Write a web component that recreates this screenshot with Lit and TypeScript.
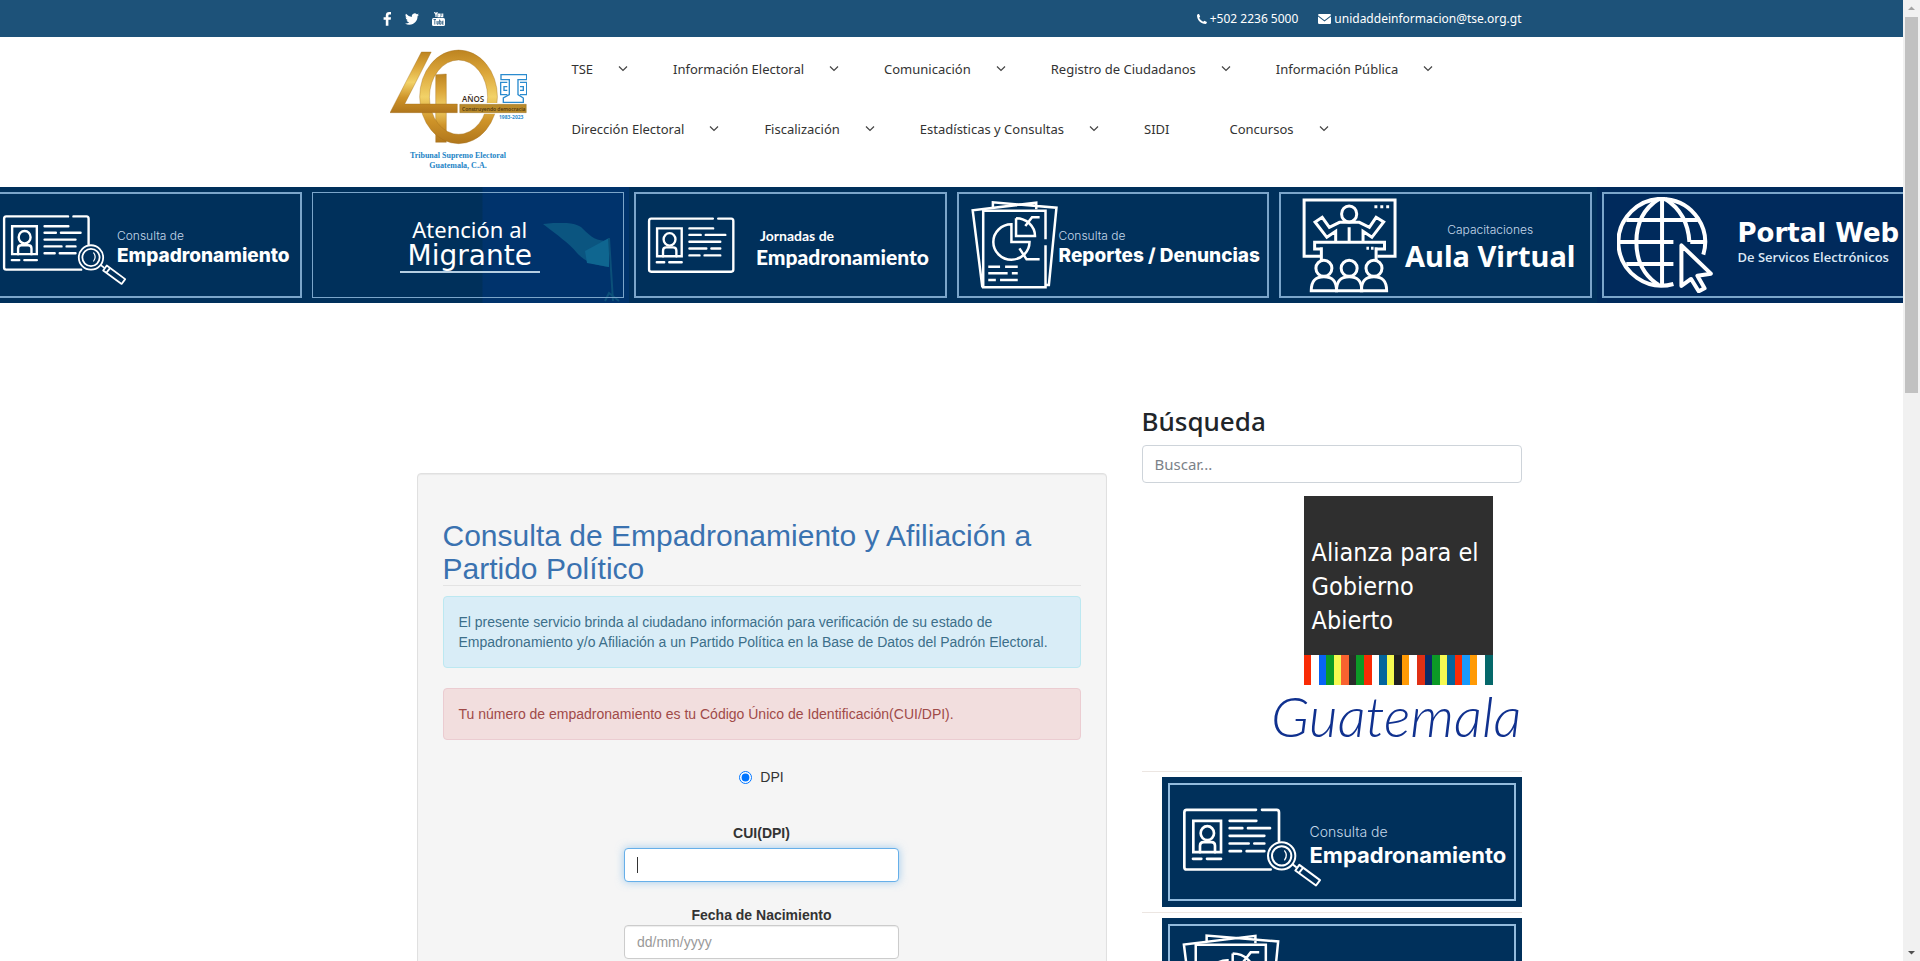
import { LitElement, html, css, svg, nothing } from "lit";
import { customElement, property } from "lit/decorators.js";

const idCard = (lens: boolean) => svg`
  <g fill="none" stroke="#fff" stroke-width="8" stroke-linecap="round" stroke-linejoin="round">
    ${lens
      ? svg`<path d="M408 162H200Q193 162 193 170V334Q193 341 200 341H452M426 162H470Q477 162 477 170V256"/>`
      : svg`<path d="M408 162H200Q193 162 193 170V334Q193 341 200 341H470Q477 341 477 334V170Q477 162 470 162H426"/>`}
    <path d="M220 195H303V289H220Z" stroke-linejoin="miter"/>
    <ellipse cx="262" cy="232" rx="20" ry="21"/>
    <path d="M240 289V270Q240 259 251 259H274Q285 259 285 270V289"/>
    <path d="M329 195H409M329 217H367M384 217H450M329 240H433M329 263H386M403 263H433M329 286H363M380 286H433M219 309H244M261 309H303"/>
  </g>
  ${lens
    ? svg`<g fill="#00305b" stroke="#fff" stroke-width="6" stroke-linejoin="round">
        <circle cx="485" cy="300" r="41"/><circle cx="485" cy="300" r="29"/>
        <path d="M494 285Q504 298 494 312" fill="none" stroke-linecap="round" stroke-width="4"/>
        <path d="M517 325L530 335" />
        <path d="M538 327L600 373L588 389L526 344Z"/><path d="M549 336L537 351" />
      </g>`
    : nothing}`;

const thick = (paths: unknown) => svg`<g fill="none" stroke="#fff" stroke-width="3" stroke-linejoin="miter" stroke-linecap="butt">${paths}</g>`;

const reports = thick(svg`<g transform="scale(.421 .3333) translate(-833 -63)">
  <g stroke-width="2.5">
    <path vector-effect="non-scaling-stroke" d="M1010 178V92H862V322H1010V196"/>
    <path vector-effect="non-scaling-stroke" d="M860 322L837 91L988 68V88M885 84V67L1036 83L1018 315H1010"/>
    <path vector-effect="non-scaling-stroke" d="M929 133A43 53 0 1 0 972 186H929Z"/>
    <path vector-effect="non-scaling-stroke" d="M940 115V168H985A45 53 0 0 0 940 115M962 138L978 112H996M948 205L965 238H996"/>
    <path vector-effect="non-scaling-stroke" d="M874 260H902M914 260H944M874 280H920M930 280H944M874 300H892M902 300H944"/>
  </g></g>`);

const classroom = thick(svg`<g transform="scale(.421 .3333) translate(-101 -52)">
  <path vector-effect="non-scaling-stroke" d="M147 227H106V58H322V227H280"/>
  <path vector-effect="non-scaling-stroke" d="M273 78H280M287 78H294M301 78H308M254 203H260M265 203H271"/>
  <ellipse vector-effect="non-scaling-stroke" cx="213" cy="100" rx="18" ry="24"/>
  <path vector-effect="non-scaling-stroke" d="M181 184V152L160 170L132 124L149 110L166 140L190 125H237L261 140L277 110L295 124L267 170L246 152V184M213 140V184"/>
  <path vector-effect="non-scaling-stroke" d="M147 205H131V185H297V205H277M147 200V238M277 200V238"/>
  ${[153, 213, 272].map(x => svg`<ellipse vector-effect="non-scaling-stroke" cx=${x} cy="263" rx="19" ry="24"/>
  <path vector-effect="non-scaling-stroke" d="M${x - 30} 330C${x - 30} 300 ${x - 20} 288 ${x} 288C${x + 20} 288 ${x + 30} 300 ${x + 30} 330Z"/>`)}
</g>`);

const globe = svg`<g fill="none" stroke="#fff" stroke-width="4" stroke-linejoin="round"><g transform="scale(.421 .3333) translate(-846 -51)">
  <path vector-effect="non-scaling-stroke" d="M1051 224A103 130 0 1 0 980 312"/>
  <path vector-effect="non-scaling-stroke" d="M945 57Q892 100 892 186T945 315M961 57Q1014 100 1018 186M953 56V316"/>
  <path vector-effect="non-scaling-stroke" d="M868 120H1038M850 186H980M1020 186H1056M868 252H980"/>
  <path vector-effect="non-scaling-stroke" d="M999 196V318L1022 297L1040 334L1054 325L1037 287L1069 281Z"/>
</g></g>`;

type Banner = {
  kind: string;
  small: string;
  big: string;
  icon?: unknown;
  box?: string;
};

const BANNERS: Record<string, Banner> = {
  empadronamiento: { kind: "consulta", small: "Consulta de", big: "Empadronamiento", icon: idCard(true), box: "186 154 420 242" },
  migrante: { kind: "migrante", small: "Atención al", big: "Migrante" },
  jornadas: { kind: "jornadas", small: "Jornadas de", big: "Empadronamiento", icon: idCard(false), box: "186 154 300 194" },
  reportes: { kind: "reportes", small: "Consulta de", big: "Reportes / Denuncias", icon: reports, box: "0 0 88 88" },
  aula: { kind: "aula", small: "Capacitaciones", big: "Aula Virtual", icon: classroom, box: "0 0 95 95" },
  portal: { kind: "portal", small: "De Servicos Electrónicos", big: "Portal Web", icon: globe, box: "0 0 96 96" },
};

@customElement("tse-banner")
export class TseBanner extends LitElement {
  @property() name = "empadronamiento";
  @property({ type: Boolean, reflect: true }) large = false;

  static styles = css`
    :host { display: block; }
    .card { box-sizing: border-box; height: 116px; padding: 5px; background: #00305b; color: #fff; text-decoration: none; display: flex; font-family: Inter, sans-serif; overflow: hidden; }
    .frame { flex: 1; min-width: 0; box-sizing: border-box; border: 2px solid #7ba5ca; display: flex; align-items: center; white-space: nowrap; }
    svg { flex: none; display: block; }
    .text { display: flex; flex-direction: column; padding-top: 4px; }
    .small { font-size: 12px; line-height: 18px; font-weight: 300; color: #c5d8ea; }
    .big { font-size: 19px; line-height: 22px; font-weight: 800; }
    .consulta .frame { padding-left: 11px; }
    .consulta svg { width: 125px; height: 72px; margin-top: 10px; }
    .consulta .text { margin-left: -10px; }
    .migrante { background: linear-gradient(90deg, #00305b 0 175px, #00336c 176px 100%); position: relative; }
    .migrante .frame { justify-content: center; border-width: 1px; z-index: 1; }
    .migrante .text { align-items: center; padding: 0; margin-left: 4px; }
    .migrante .small { font: 400 22px/24px "Noto Sans", sans-serif; color: #fff; }
    .migrante .big { font: 400 28px/30px "DejaVu Sans", sans-serif; border-bottom: 2px solid #b5cee2; padding: 0 8px; }
    .flag { position: absolute; right: 8px; bottom: 0; width: 78px; height: 80px; }
    .jornadas .frame { padding-left: 11px; }
    .jornadas svg { width: 89px; height: 58px; }
    .jornadas .text { margin-left: 20px; }
    .jornadas .small { font: 700 14px/20px Lato, sans-serif; color: #fff; padding-left: 4px; }
    .jornadas .big { font: 900 21px/22px Lato, sans-serif; }
    .reportes .frame { padding-left: 12px; }
    .reportes svg { width: 88px; height: 88px; }
    .aula .frame { padding-left: 21px; }
    .aula svg { width: 95px; height: 95px; }
    .aula .text { align-items: center; margin-left: 8px; }
    .aula .big { font: 700 29px/34px "Noto Sans", sans-serif; }
    .portal { background: #002a5c; }
    .portal .frame { padding-left: 13px; }
    .portal svg { width: 96px; height: 96px; }
    .portal .text { margin-left: 25px; flex-direction: column-reverse; padding: 0 0 8px; }
    .portal .big { font: 700 26px/32px "DejaVu Sans", sans-serif; }
    .portal .small { font: 600 13px/16px "Open Sans", sans-serif; color: #dce8f5; }
    :host([large]) .card { height: 130px; padding: 6px; }
    :host([large]) .frame { padding-left: 12px; border-color: #93bbdd; }
    :host([large]) .small { font-size: 14px; line-height: 22px; }
    :host([large]) .big { font-size: 22px; line-height: 24px; font-weight: 700; }
    :host([large]) .consulta svg { width: 140px; height: 81px; }
    :host([large]) .consulta .text { margin-left: -12px; }
    :host([large]) .reportes svg { width: 99px; height: 99px; }
  `;

  render() {
    const b = BANNERS[this.name];
    return html`<a class="card ${b.kind}" href="#">
      ${b.kind === "migrante"
        ? html`<svg class="flag" viewBox="0 0 78 80" aria-hidden="true">
            <path d="M0 1C16-1 30-1 38 4C46 12 54 20 66 17V44C52 42 42 39 34 30C26 20 14 12 0 1Z" fill="#0b5580"/>
            <path d="M42 28L66 15V44L44 40Z" fill="#0f6690"/>
            <path d="M66 15L70 78M62 78L66 70L76 78" stroke="#0b5079" stroke-width="2" fill="none"/>
          </svg>`
        : nothing}
      <span class="frame">
        ${b.icon ? html`<svg viewBox=${b.box!} aria-hidden="true">${b.icon}</svg>` : nothing}
        <span class="text"><span class="small">${b.small}</span><span class="big">${b.big}</span></span>
      </span>
    </a>`;
  }
}

const NAV: [string, boolean][] = [
  ["TSE", true], ["Información Electoral", true], ["Comunicación", true], ["Registro de Ciudadanos", true], ["Información Pública", true],
  ["Dirección Electoral", true], ["Fiscalización", true], ["Estadísticas y Consultas", true], ["SIDI", false], ["Concursos", true],
];

const STRIPES = ["#f92b05", "#fff", "#0863f5", "#0c9a26", "#f5f951", "#f9622f", "#2b2b2b", "#0c9a26", "#f92b05", "#fff", "#03659c", "#f5f951", "#1f1f1f",
  "#ff9a05", "#fff", "#e03014", "#0a2c66", "#0c9a26", "#f5f951", "#03659c", "#f92b05", "#1899fb", "#ff9a05", "#fff", "#05686a"];

@customElement("app-root")
export class AppRoot extends LitElement {
  static styles = css`
    :host { display: grid; grid-template-columns: minmax(0, 1fr) 17px; height: 100vh; overflow: hidden; background: #fff; color: #212529; font-family: "Noto Sans", sans-serif; }
    .page { min-width: 0; overflow: hidden; }
    .container { box-sizing: border-box; max-width: 1140px; margin: 0 auto; }
    a { color: inherit; text-decoration: none; }

    .topbar { background: #1d5279; color: #fff; font-size: 12px; }
    .topbar .container { height: 37px; display: flex; justify-content: space-between; align-items: center; }
    .social, .contact { display: flex; align-items: center; }
    .social { gap: 13px; padding-left: 1px; }
    .social a { display: flex; }
    .contact { gap: 20px; }
    .contact a { display: flex; align-items: center; gap: 3px; }
    svg { display: block; }

    .header { display: flex; height: 150px; }
    .logo { width: 137px; padding: 12px 45px 0 8px; flex: none; }
    .caption { color: #2384c6; font: 700 8px/10px "Liberation Serif", serif; text-align: center; margin-top: 5px; }
    .nav { flex: 1; display: flex; flex-wrap: wrap; align-content: flex-start; padding: 2px 0 0; margin: 0; list-style: none; font-size: 13px; color: #333; }
    .nav li { height: 60px; display: flex; align-items: center; margin-right: 44px; }
    .nav li.plain { margin-right: 60px; }
    .nav a { display: flex; align-items: center; gap: 24px; }

    .slider { overflow: hidden; background: #00305b; }
    .track { display: flex; margin: 0 -16px; }
    .track tse-banner { flex: 1 1 0; min-width: 0; }

    .main { display: grid; grid-template-columns: minmax(0, 1fr) 380px; padding-top: 96px; }
    .content { padding: 0 35px; font-family: "Liberation Sans", sans-serif; font-size: 14px; line-height: 20px; color: #333; }
    .well { box-sizing: border-box; margin-top: 74px; padding: 45px 25px 60px; background: #f5f5f5; border: 1px solid #e0e0e0; border-radius: 4px; box-shadow: inset 0 1px 1px rgba(0, 0, 0, .05); }
    .well h2 { margin: 0 0 10px; font-size: 30px; line-height: 33px; font-weight: 500; color: #3a72b0; border-bottom: 1px solid #e3e3e3; }
    .alert { border: 1px solid; border-radius: 4px; padding: 15px; margin: 0 0 20px; }
    .info { background: #d9edf7; border-color: #bce8f1; color: #3c6f8a; }
    .danger { background: #f2dede; border-color: #ebccd1; color: #a04a48; }
    form { display: flex; flex-direction: column; align-items: center; }
    .choice { display: flex; align-items: center; gap: 8px; height: 34px; }
    .choice input { margin: 0; width: 13px; height: 13px; accent-color: #0075ff; }
    .field { font-weight: 700; margin-top: 29px; }
    .control { box-sizing: border-box; width: 275px; height: 34px; margin-top: 5px; padding: 6px 12px; border: 1px solid #ccc; border-radius: 4px; background: #fff; font: 14px/20px "Liberation Sans", sans-serif; color: #555; box-shadow: inset 0 1px 1px rgba(0, 0, 0, .075); outline: none; }
    .control::placeholder { color: #999; opacity: 1; }
    .active { border-color: #66afe9; box-shadow: 0 0 8px rgba(102, 175, 233, .6); background: linear-gradient(#333, #333) 12px center / 1px 16px no-repeat #fff; }
    .date-label { margin-top: 23px; }
    .date { margin-top: 0; }

    .side h3 { margin: 0; padding-top: 5px; font-size: 26px; line-height: 34px; font-weight: 500; }
    .search { box-sizing: border-box; width: 100%; height: 38px; margin-top: 7px; padding: 6px 12px; border: 1px solid #ced4da; border-radius: 4px; font: 15px/24px "Noto Sans", sans-serif; display: block; }
    .search::placeholder { color: #7b8289; opacity: 1; }
    .ogp { margin: 13px 0 0; display: flex; flex-direction: column; align-items: flex-end; }
    .square { width: 189px; margin-right: 29px; background: #2f2f2f; color: #fff; }
    .square p { margin: 0; padding: 40px 0 17px 8px; font: 25px/34px "DejaVu Sans Condensed", "DejaVu Sans", sans-serif; font-stretch: condensed; white-space: nowrap; }
    .stripes { display: flex; height: 30px; }
    .stripes i { flex: 1; }
    .script { color: #10318f; font: italic 300 56px/62px Lato, cursive; padding-bottom: 24px; }
    .rule { border: 0; border-top: 1px solid #ece6e2; margin: 0 0 5px; }
    .side tse-banner { margin: 0 0 5px 20px; }

    .scrollbar { background: #f1f1f1; display: flex; flex-direction: column; align-items: center; }
    .thumb { width: 13px; height: 376px; background: #c1c1c1; }
    .arrow { width: 17px; height: 17px; }
    .down { margin-top: auto; }
  `;

  logo() {
    return html`<svg width="137" height="97" viewBox="0 0 137 97" role="img" aria-label="40 años TSE">
      <defs>
        <linearGradient id="gold" x1="0" y1="0" x2="0" y2="1">
          <stop offset="0" stop-color="#bd8420"/><stop offset=".25" stop-color="#dca73b"/><stop offset=".5" stop-color="#f2d268"/><stop offset=".75" stop-color="#cf9429"/><stop offset="1" stop-color="#b0761c"/>
        </linearGradient>
      </defs>
      <g transform="scale(.408 .3333) translate(-48 -147)">
        <path fill="url(#gold)" stroke="#a06c18" d="M160 224L186 222V427H160Z"/>
        <path fill="url(#gold)" stroke="#a06c18" fill-rule="evenodd" d="M216 150A95 140 0 0 1 216 431A95 140 0 0 1 216 150ZM216 180A71 111 0 0 0 216 403A71 111 0 0 0 216 180Z"/>
        <path fill="#fff" d="M214 309H384V341H214Z"/>
        <path fill="url(#gold)" stroke="#a06c18" d="M125 156H149L84 312H213V338H48Z"/>
        <path fill="#b98a2b" stroke="#8a6217" d="M219 313H382V338H219Z"/>
      </g>
      <g transform="scale(.3333) translate(-12 -21)" fill="none" stroke="#2a8bcf" stroke-width="4">
        <path d="M345 98H422V113H396V158L412 168V181H352V168L370 158V113H345Z"/>
        <path d="M364 121H344V158H364M364 134H354V145H364M402 121H422V158H402M402 134H412V145H402"/>
      </g>
      <text x="72" y="53" font-family="Open Sans" font-weight="600" font-size="8" fill="#3a2b18">AÑOS</text>
      <text x="72" y="62" font-family="Open Sans" font-weight="600" font-size="5" fill="#4b350f">Construyendo democracia</text>
      <text x="109" y="70" font-family="Open Sans" font-weight="700" font-size="5" fill="#2a8bcf">1983-2023</text>
    </svg>`;
  }

  render() {
    return html`
      <div class="page">
        <div class="topbar"><div class="container">
          <div class="social">
            <a href="#" aria-label="Facebook"><svg width="9" height="14" viewBox="0 0 9 14"><path fill="#fff" d="M8 .1V2.4H6.7C5.7 2.4 5.4 2.9 5.4 3.6V5.2H8L7.7 7.7H5.4V13.7H2.8V7.7H.6V5.2H2.8V3.3C2.8 1.200 4.100 0 6.100 0C7 0 7.800 0 8 .1Z"/></svg></a>
            <a href="#" aria-label="Twitter"><svg width="14" height="14" viewBox="0 0 24 24"><path fill="#fff" d="M24 4.600a10 10 0 0 1-2.800.8 5 5 0 0 0 2.100-2.700 10 10 0 0 1-3.100 1.200 4.900 4.900 0 0 0-8.400 4.500A14 14 0 0 1 1.700 3.200a4.900 4.900 0 0 0 1.500 6.500 4.900 4.900 0 0 1-2.200-.6v.1a4.900 4.900 0 0 0 3.900 4.800 5 5 0 0 1-2.200.1 4.900 4.900 0 0 0 4.600 3.400A9.900 9.900 0 0 1 0 19.500a14 14 0 0 0 7.500 2.200c9.100 0 14-7.500 14-14v-.6A10 10 0 0 0 24 4.600z"/></svg></a>
            <a href="#" aria-label="YouTube"><svg width="13" height="14" viewBox="0 0 13 14"><rect x="0" y="6" width="13" height="8" rx="1.500" fill="#fff"/><path fill="none" stroke="#fff" stroke-width="1.200" d="M2.500 0L4 2.800V5M5.300 0L4 2.800M6 2.200H7.400V4.600H6ZM9 1.500V4.600H10.700V1.500"/><path stroke="#1d5279" stroke-width=".8" fill="none" d="M1.500 7.500H4M2.800 7.500V12.500M5 9V12.200H6.200V9M7.600 7.500V12.200H9V9.200H7.600M11.600 10.800H10.300V9.200H11.600M10.300 10.800V12.200H11.600"/></svg></a>
          </div>
          <div class="contact">
            <a href="#"><svg width="10" height="10" viewBox="0 0 10 10"><path fill="#fff" d="M0 1.200C.2.500 1.300 0 2 .1L3.200 2.600L2.200 3.800C2.900 5.400 4.500 7.100 6.200 7.800L7.400 6.800L9.900 8C10 8.800 9.300 9.800 8.600 10C4 10 0 6 0 1.200Z"/></svg>+502 2236 5000</a>
            <a href="#"><svg width="13" height="10" viewBox="0 0 13 10"><path fill="#fff" d="M0 1.200Q0 0 1.200 0H11.800Q13 0 13 1.200L6.500 6.200ZM0 2.600L6.500 7.500L13 2.600V8.800Q13 10 11.800 10H1.200Q0 10 0 8.800Z"/></svg>unidaddeinformacion@tse.org.gt</a>
          </div>
        </div></div>

        <header class="container header">
          <a class="logo" href="#">${this.logo()}<div class="caption">Tribunal Supremo Electoral<br>Guatemala, C.A.</div></a>
          <ul class="nav">
            ${NAV.map(([label, menu]) => html`<li class=${menu ? "" : "plain"}><a href="#">${label}${menu
              ? html`<svg width="12" height="8" viewBox="0 0 12 8"><path d="M2 1.500L6 5.500L10 1.500" fill="none" stroke="#444" stroke-width="1.200"/></svg>` : nothing}</a></li>`)}
          </ul>
        </header>

        <div class="slider"><div class="track">
          ${Object.keys(BANNERS).map(k => html`<tse-banner name=${k}></tse-banner>`)}
        </div></div>

        <main class="container main">
          <section class="content"><div class="well">
            <h2>Consulta de Empadronamiento y Afiliación a Partido Político</h2>
            <p class="alert info">El presente servicio brinda al ciudadano información para verificación de su estado de Empadronamiento y/o Afiliación a un Partido Política en la Base de Datos del Padrón Electoral.</p>
            <p class="alert danger">Tu número de empadronamiento es tu Código Único de Identificación(CUI/DPI).</p>
            <form>
              <label class="choice"><input type="radio" name="doc" checked>DPI</label>
              <label class="field" for="cui">CUI(DPI)</label>
              <input class="control active" id="cui" type="text">
              <label class="field date-label" for="birth">Fecha de Nacimiento</label>
              <input class="control date" id="birth" type="text" placeholder="dd/mm/yyyy">
            </form>
          </div></section>
          <aside class="side">
            <h3><label for="search">Búsqueda</label></h3>
            <input class="search" id="search" type="search" placeholder="Buscar...">
            <div class="ogp">
              <div class="square">
                <p>Alianza para el<br>Gobierno<br>Abierto</p>
                <div class="stripes">${STRIPES.map(c => html`<i style="background:${c}"></i>`)}</div>
              </div>
              <span class="script">Guatemala</span>
            </div>
            <hr class="rule">
            <tse-banner large name="empadronamiento"></tse-banner>
            <hr class="rule">
            <tse-banner large name="reportes"></tse-banner>
          </aside>
        </main>
      </div>
      <div class="scrollbar" aria-hidden="true">
        <svg class="arrow" viewBox="0 0 17 17"><path d="M5 10L8.500 6.500L12 10Z" fill="#a3a3a3"/></svg>
        <div class="thumb"></div>
        <svg class="arrow down" viewBox="0 0 17 17"><path d="M5 7L8.500 10.500L12 7Z" fill="#505050"/></svg>
      </div>`;
  }
}
